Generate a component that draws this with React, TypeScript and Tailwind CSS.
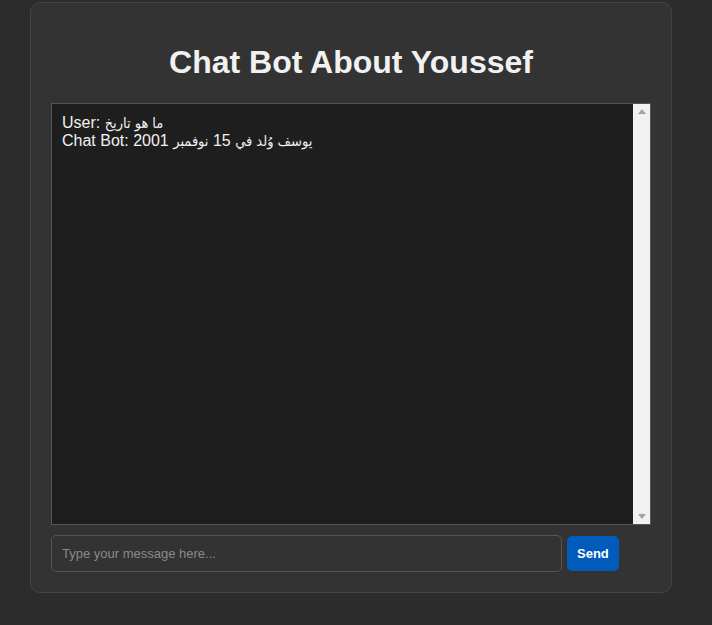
import React from "react";

const stack = '"Liberation Sans", Arial, "DejaVu Sans Condensed", "DejaVu Sans", sans-serif';

function Ar({ children }: { children: React.ReactNode }) {
  return <span className="text-[14.5px]">{children}</span>;
}

export default function App() {
  return (
    <div className="min-h-[625px] w-full bg-[#2c2c2c] pt-[2px]" style={{ fontFamily: stack }}>
      <div className="ml-[30px] w-[642px] rounded-[10px] border border-[#444444] bg-[#333333] p-[20px]">
        <h1 className="mt-[21px] mb-[22px] text-center text-[32px] font-bold leading-[37px] text-[#f1f1f1]">
          Chat Bot About Youssef
        </h1>
        <div className="flex h-[422px] w-[600px] border border-[#555555] bg-[#1e1e1e]">
          <div className="flex-1 whitespace-pre-wrap p-[10px] text-[16px] leading-[18px] text-[#f1f1f1]">
            <div>
              User: <Ar>ما هو تاريخ</Ar>
            </div>
            <div>
              Chat Bot: <Ar>يوسف وُلد في</Ar> 15 <Ar>نوفمبر</Ar> 2001
            </div>
          </div>
          <div className="flex w-[17px] flex-col items-center justify-between bg-[#f1f1f1] py-[5px]">
            <svg width="8" height="5" viewBox="0 0 8 5">
              <path d="M4 0 L8 5 L0 5 Z" fill="#a3a3a3" />
            </svg>
            <svg width="8" height="5" viewBox="0 0 8 5">
              <path d="M0 0 L8 0 L4 5 Z" fill="#a3a3a3" />
            </svg>
          </div>
        </div>
        <div className="mt-[10px] flex items-center">
          <input
            type="text"
            placeholder="Type your message here..."
            className="h-[37px] w-[511px] rounded-[5px] border border-[#555555] bg-[#333333] px-[10px] text-[13px] text-[#f1f1f1] outline-none placeholder:text-[#8a8a8a]"
            style={{ fontFamily: stack }}
          />
          <button className="ml-[5px] h-[35px] rounded-[5px] bg-[#005bbb] px-[10px] text-[13px] font-bold text-white">
            Send
          </button>
        </div>
      </div>
    </div>
  );
}
